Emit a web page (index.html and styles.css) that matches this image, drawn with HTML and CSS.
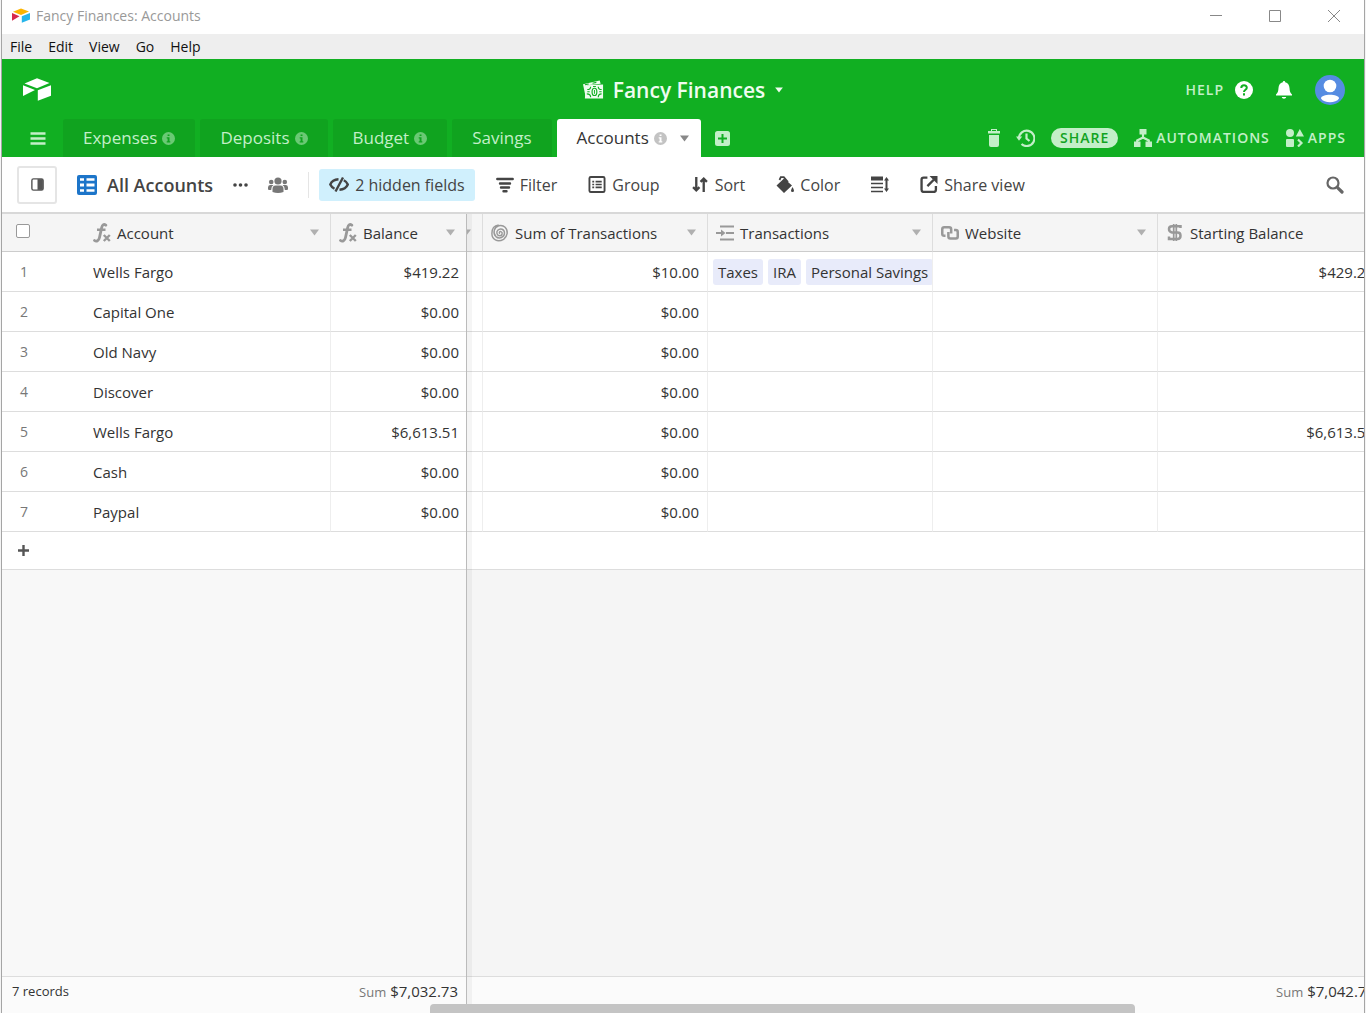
FILE: index.html
```html
<!DOCTYPE html>
<html lang="en">
<head>
    <meta charset="UTF-8">
    <meta name="viewport" content="width=device-width, initial-scale=1.0">
    <title>Fancy Finances: Accounts</title>
    <link rel="stylesheet" href="styles.css">
</head>
<body>
    <!-- Shared icons -->
    <svg class="sprite" aria-hidden="true">
        <symbol id="info" viewBox="0 0 13 13">
            <path fill="currentColor" fill-rule="evenodd" d="M6.500 0a6.500 6.500 0 1 0 0 13a6.500 6.500 0 0 0 0-13zM5.600 2.400h1.900v1.700H5.600zM4.700 5.200h2.800v4h.8v1.200H4.700V9.200h.9V6.400h-.9z"/>
        </symbol>
        <symbol id="caret" viewBox="0 0 9 7">
            <path fill="currentColor" d="M0 .5h9L4.500 6.500z"/>
        </symbol>
        <symbol id="formula" viewBox="0 0 18 20">
            <path fill="none" stroke="currentColor" stroke-width="2.800" stroke-linecap="round" d="M12.800 2.200C11 .8 9.300 1.500 8.700 4.500L6.500 14.500C5.800 17.800 3.500 19 1.500 17.500"/>
            <path fill="none" stroke="currentColor" stroke-width="2.400" d="M4 6.800h8.500M10.800 12l6 6M16.800 12l-6 6"/>
        </symbol>
    </svg>

    <div class="window">
        <div class="title-bar">
            <svg class="app-icon" viewBox="0 0 18 15">
                <path fill="#fcb400" d="M1 3.800L9 .4l8 3.200-8 3.300z"/>
                <path fill="#d8294c" d="M0 5l7.500 3.200L0 12.700z"/>
                <path fill="#27b5ea" d="M9.800 8.300L18 5v6.400l-8.200 3.300z"/>
            </svg>
            <span class="title-text">Fancy Finances: Accounts</span>
            <div class="window-controls">
                <button aria-label="Minimize"><svg viewBox="0 0 12 12"><path d="M0 5.500h12"/></svg></button>
                <button aria-label="Maximize"><svg viewBox="0 0 12 12"><path d="M.5.5h11v11H.5z"/></svg></button>
                <button aria-label="Close"><svg viewBox="0 0 12 12"><path d="M0 0l12 12M12 0L0 12"/></svg></button>
            </div>
        </div>

        <nav class="menu-bar">
            <button>File</button>
            <button>Edit</button>
            <button>View</button>
            <button>Go</button>
            <button>Help</button>
        </nav>

        <header class="base-header">
            <div class="header-top">
                <a href="#" class="home" aria-label="Home">
                    <svg viewBox="0 0 28 23">
                        <path fill="#fff" d="M1.500 5.400L14 .3l12.500 4.800L14 10.300zM0 7.300l12 4.800L0 18zM14.800 12.300L28 7.200v10.500l-13.200 5.100z"/>
                    </svg>
                </a>
                <button class="base-name">
                    <svg class="money" viewBox="0 0 22 20">
                        <path fill="currentColor" d="M0 4L17.500 0l1 3.500L4 5v13l-1 .3z"/>
                        <path fill="currentColor" d="M3 5l18-.800V19H2z"/>
                        <g fill="none" stroke="#11af22" stroke-width="1.200">
                            <ellipse cx="12" cy="12" rx="2.500" ry="3.800"/>
                            <path d="M4.500 9.500C6.500 9.500 8 8.500 8 6.500M16 6.500c0 2 1.500 3 3.500 3M4 14c2.500 0 4 1.500 4 3.500M16 17.500c0-2 1.500-3.500 3.500-3.500M10.500 6.300h3M4.500 11.800h2.500M17 11.800h2.500M2 4.500l4-.8M10 3l4-1"/>
                        </g>
                        <path stroke="#11af22" d="M12 10v4"/>
                    </svg>
                    <h1>Fancy Finances</h1>
                    <svg class="name-caret"><use href="#caret"/></svg>
                </button>
                <div class="header-user">
                    <button class="help">HELP
                        <svg class="help-icon" viewBox="0 0 18 18">
                            <circle cx="9" cy="9" r="9" fill="#fff"/>
                            <path fill="none" stroke="#11af22" stroke-width="2" d="M6.300 7c0-3.700 5.500-3.500 5.500-.300C11.800 8.800 9 8.700 9 11"/>
                            <path fill="#11af22" d="M8 12.300h2v2.200H8z"/>
                        </svg>
                    </button>
                    <button aria-label="Notifications">
                        <svg class="bell" viewBox="0 0 16 18">
                            <path fill="#fff" d="M8 0c.9 0 1.200.6 1.200 1.300C12 2 13.300 4.200 13.500 7c.2 3.500.8 4.800 2.500 6.500V14.500H0v-1C1.700 11.800 2.300 10.500 2.500 7 2.700 4.200 4 2 6.800 1.300 6.800.6 7.100 0 8 0zM5.800 16h4.400c-.3 2.300-4.100 2.300-4.400 0z"/>
                        </svg>
                    </button>
                    <button aria-label="Account">
                        <svg class="avatar" viewBox="0 0 30 30">
                            <circle cx="15" cy="15" r="15" fill="#568ce2"/>
                            <circle cx="15" cy="11" r="6.300" fill="#fff"/>
                            <path fill="#fff" d="M6 23.500c0-5 18-5 18 0-3 5-15 5-18 0z"/>
                        </svg>
                    </button>
                </div>
            </div>

            <div class="header-tabs">
                <button class="all-tables" aria-label="All tables">
                    <svg viewBox="0 0 15 13"><path fill="none" stroke="currentColor" stroke-width="2.400" d="M0 1.500h15M0 6.500h15M0 11.500h15"/></svg>
                </button>
                <nav class="tabs">
                    <button class="tab">Expenses <svg class="info"><use href="#info"/></svg></button>
                    <button class="tab">Deposits <svg class="info"><use href="#info"/></svg></button>
                    <button class="tab">Budget <svg class="info"><use href="#info"/></svg></button>
                    <button class="tab">Savings</button>
                    <button class="tab active">Accounts <svg class="info"><use href="#info"/></svg> <svg class="caret"><use href="#caret"/></svg></button>
                </nav>
                <button class="add-table" aria-label="Add table">
                    <svg viewBox="0 0 15 15"><path fill="currentColor" fill-rule="evenodd" d="M2.500 0h10A2.500 2.500 0 0 1 15 2.500v10a2.500 2.500 0 0 1-2.500 2.500h-10A2.500 2.500 0 0 1 0 12.500v-10A2.500 2.500 0 0 1 2.500 0zM6.500 3v3.500H3v2h3.500V12h2V8.500H12v-2H8.500V3z"/></svg>
                </button>
                <div class="base-actions">
                    <button aria-label="Trash">
                        <svg class="trash" viewBox="0 0 12 18">
                            <path fill="currentColor" d="M0 2h3V0h6v2h3v2.500H0zM1 6h10v10q0 2-2 2H3q-2 0-2-2z"/>
                            <path fill="#11af22" d="M4 1h4v1H4z"/>
                        </svg>
                    </button>
                    <button aria-label="History">
                        <svg class="history" viewBox="0 0 19 18">
                            <path fill="none" stroke="currentColor" stroke-width="2.200" d="M3 9.500A7.700 7.700 0 1 1 5.500 15M10.500 4.500V9.500l3 2.500"/>
                            <path fill="currentColor" d="M0 7.500h6.200L3 11.700z"/>
                        </svg>
                    </button>
                    <button class="share">SHARE</button>
                    <button class="automations">
                        <svg class="tree" viewBox="0 0 18 18">
                            <path fill="currentColor" d="M5.500 0h7v5.500h-7zM0 12.500h6.500V18H0zM11.500 12.500H18V18h-6.500z"/>
                            <path fill="none" stroke="currentColor" stroke-width="2.200" d="M9 5v4M3.200 13.500V11.500L9 8.500l5.800 3v2"/>
                        </svg>
                        AUTOMATIONS
                    </button>
                    <button class="apps">
                        <svg class="shapes" viewBox="0 0 18 18">
                            <circle cx="4" cy="4" r="4" fill="currentColor"/>
                            <path fill="currentColor" d="M13.800 0L18 7.500H9.800zM1 10h6q1 0 1 1v6q0 1-1 1H1q-1 0-1-1v-6q0-1 1-1z"/>
                            <path fill="none" stroke="currentColor" stroke-width="2.200" d="M12 10.500l3.500 3.500-3.500 3.500"/>
                        </svg>
                        APPS
                    </button>
                </div>
            </div>
        </header>

        <div class="toolbar">
            <button class="sidebar-toggle" aria-label="Toggle sidebar">
                <svg viewBox="0 0 12 12"><rect x=".8" y=".8" width="10.400" height="10.400" rx="1.500" fill="none" stroke="#555" stroke-width="1.300"/><path fill="#555" d="M6 1h5v10H6z"/></svg>
            </button>
            <button class="view-name">
                <svg viewBox="0 0 20 20"><path fill="#1d75c9" fill-rule="evenodd" d="M2 0h16q2 0 2 2v16q0 2-2 2H2q-2 0-2-2V2q0-2 2-2zM3 3.200v2.600h4V3.200zM9.500 3.200v2.600H17.500V3.200zM3 8.600v2.800h4V8.600zM9.500 8.600v2.800H17.500V8.600zM3 14.200v2.600h4v-2.600zM9.500 14.200v2.600H17.500v-2.600z"/></svg>
                <span>All Accounts</span>
            </button>
            <button class="more" aria-label="View options">
                <svg viewBox="0 0 15 4"><circle cx="2" cy="2" r="1.800"/><circle cx="7.500" cy="2" r="1.800"/><circle cx="13" cy="2" r="1.800"/></svg>
            </button>
            <button class="people" aria-label="Collaborative view">
                <svg viewBox="0 0 20 16">
                    <circle cx="10" cy="4" r="3.600"/><circle cx="3.200" cy="5" r="2.300"/><circle cx="16.800" cy="5" r="2.300"/>
                    <path d="M4.500 15V12q0-3.500 3-3.500h5q3 0 3 3.500v3q-5.500 2-11 0zM0 12.500V10.500Q0 8 2 8h3.500Q3 9.500 3.300 13 1.500 13.300 0 12.500zM20 12.500V10.500Q20 8 18 8h-3.500q2.500 1.500 2.200 5 1.800.3 3.300-.5z"/>
                </svg>
            </button>
            <div class="divider"></div>
            <button class="tool hidden-fields">
                <svg viewBox="0 0 20 16"><path fill="none" stroke="currentColor" stroke-width="2.400" d="M9.500 2.800C5.500 3 2.500 5 1.300 8q1.200 2.700 4.200 4.200M14 1L6.500 15M14.800 3.800q3 1.500 4 4.200c-1.200 3-4.300 5-8.300 5.200"/></svg>
                2 hidden fields
            </button>
            <button class="tool">
                <svg viewBox="0 0 18 16"><path fill="none" stroke="currentColor" stroke-width="2.400" stroke-linecap="round" d="M1.300 2.500h15.400M4 7h10M5 11h8M7.500 14.800h3"/></svg>
                Filter
            </button>
            <button class="tool">
                <svg viewBox="0 0 18 18"><rect x="1" y="1" width="16" height="16" rx="1.500" fill="none" stroke="currentColor" stroke-width="2"/><path fill="none" stroke="currentColor" stroke-width="1.800" d="M4 6h2M7.500 6H14M4 9h2M7.500 9H14M4 12h2M7.500 12H14"/></svg>
                Group
            </button>
            <button class="tool sort">
                <svg viewBox="0 0 16 16"><path fill="none" stroke="currentColor" stroke-width="2.200" d="M4.500 1v12.500M1.500 10.500l3 3 3-3M11.500 15V2.500M8.500 5.500l3-3 3 3"/></svg>
                Sort
            </button>
            <button class="tool">
                <svg viewBox="0 0 18 17"><path fill="currentColor" d="M.5 9.500L8 2.500l8 7-8 7.500zM16.500 11q3 5 0 5t0-5z"/><path fill="none" stroke="currentColor" stroke-width="1.800" d="M3.500 4l1.300-2.800h3L12 6"/></svg>
                Color
            </button>
            <button class="tool" aria-label="Row height">
                <svg viewBox="0 0 18 16"><path fill="currentColor" d="M0 0h12v4H0zM13 4l2.500-3.500L18 4zM13 12l2.500 3.500L18 12z"/><path fill="none" stroke="currentColor" stroke-width="1.600" d="M0 7h12M0 11h12M0 15h12"/><path stroke="currentColor" stroke-width="2" d="M15.500 3v10"/></svg>
            </button>
            <button class="tool share-view">
                <svg viewBox="0 0 16 16"><path fill="none" stroke="currentColor" stroke-width="2.200" d="M6.500 1.500H3Q1 1.500 1 3.500V13q0 2 2 2h9.500q2 0 2-2V9.500M6.500 9.500l6-6"/><path fill="currentColor" d="M8.500 0H16v7.500z"/></svg>
                Share view
            </button>
            <button class="search" aria-label="Search">
                <svg viewBox="0 0 18 18"><circle cx="7" cy="7" r="5.500" fill="none" stroke="currentColor" stroke-width="2.200"/><path stroke="currentColor" stroke-width="3.200" stroke-linecap="round" d="M11.800 11.800l4.200 4.200"/></svg>
            </button>
        </div>

        <main class="grid">
            <section class="pane pane-left">
                <table>
                    <colgroup><col class="col-number"><col class="col-account"><col class="col-balance"></colgroup>
                    <thead>
                        <tr>
                            <th class="number"><input type="checkbox" aria-label="Select all rows"></th>
                            <th><div class="field"><svg class="field-icon"><use href="#formula"/></svg><span>Account</span><svg class="caret"><use href="#caret"/></svg></div></th>
                            <th><div class="field"><svg class="field-icon"><use href="#formula"/></svg><span>Balance</span><svg class="caret"><use href="#caret"/></svg></div></th>
                        </tr>
                    </thead>
                    <tbody>
                        <tr><td class="number">1</td><td>Wells Fargo</td><td class="money-cell">$419.22</td></tr>
                        <tr><td class="number">2</td><td>Capital One</td><td class="money-cell">$0.00</td></tr>
                        <tr><td class="number">3</td><td>Old Navy</td><td class="money-cell">$0.00</td></tr>
                        <tr><td class="number">4</td><td>Discover</td><td class="money-cell">$0.00</td></tr>
                        <tr><td class="number">5</td><td>Wells Fargo</td><td class="money-cell">$6,613.51</td></tr>
                        <tr><td class="number">6</td><td>Cash</td><td class="money-cell">$0.00</td></tr>
                        <tr><td class="number">7</td><td>Paypal</td><td class="money-cell">$0.00</td></tr>
                    </tbody>
                </table>
                <div class="add-row">
                    <button aria-label="Add record"><svg viewBox="0 0 11 11"><path stroke="#555" stroke-width="2.400" d="M5.500 0v11M0 5.500h11"/></svg></button>
                </div>
                <div class="filler"></div>
                <div class="summary">
                    <span class="records">7 records</span>
                    <span><span class="sum">Sum</span> $7,032.73</span>
                </div>
            </section>

            <section class="pane pane-right">
                <table>
                    <colgroup><col class="col-cut"><col class="col-field"><col class="col-field"><col class="col-field"><col class="col-field"></colgroup>
                    <thead>
                        <tr>
                            <th class="cut"><svg class="caret"><use href="#caret"/></svg></th>
                            <th><div class="field">
                                <svg class="field-icon" viewBox="0 0 20 20"><path fill="none" stroke="currentColor" stroke-width="1.600" d="M10 10.500c-1.500-.5-.5-2.500 1-2 2.500 1 1.500 4.500-1 4.500-3.500 0-4.500-4-2.500-6 3-3 7.500-1 7.500 3 0 5-6 7-9.500 4-4-4-2-10.500 3-12 6-1.500 10 3 9.500 8.500-.5 3-2 5-4 6.500-7 4-13 0-13-6.500C1 5 4 1.500 8.500 1"/></svg>
                                <span>Sum of Transactions</span><svg class="caret"><use href="#caret"/></svg></div></th>
                            <th><div class="field">
                                <svg class="field-icon" viewBox="0 0 18 18"><path fill="none" stroke="currentColor" stroke-width="2.200" d="M4 2.500h14M0 9h7M10 9h8M4 15.500h14"/><path fill="currentColor" d="M5 5.500L9.500 9 5 12.500z"/></svg>
                                <span>Transactions</span><svg class="caret"><use href="#caret"/></svg></div></th>
                            <th><div class="field">
                                <svg class="field-icon" viewBox="0 0 20 16"><path fill="none" stroke="currentColor" stroke-width="2.800" d="M5 11H3.500Q1.400 11 1.400 9V3.700Q1.400 1.700 3.500 1.700H9q2.300 0 2.300 2.300v4.500M14.500 4.700h2q2.100 0 2.100 2.100v5q0 2.300-2.100 2.300h-6q-2.300 0-2.300-2.300V7"/></svg>
                                <span>Website</span><svg class="caret"><use href="#caret"/></svg></div></th>
                            <th><div class="field">
                                <svg class="field-icon" viewBox="0 0 18 20"><path fill="none" stroke="currentColor" stroke-width="2.500" d="M14.500 5V3.200H6Q3 3.200 3 6t3 3.500h5.500q3 0 3 3.200t-3 3.300H3v-2.500"/><path stroke="currentColor" stroke-width="1.700" d="M7.700 1v17M10.300 1v17"/></svg>
                                <span>Starting Balance</span></div></th>
                        </tr>
                    </thead>
                    <tbody>
                        <tr><td></td><td class="money-cell">$10.00</td><td class="links"><div class="chips"><span class="chip">Taxes</span><span class="chip">IRA</span><span class="chip">Personal Savings</span></div></td><td></td><td class="money-cell">$429.22</td></tr>
                        <tr><td></td><td class="money-cell">$0.00</td><td></td><td></td><td></td></tr>
                        <tr><td></td><td class="money-cell">$0.00</td><td></td><td></td><td></td></tr>
                        <tr><td></td><td class="money-cell">$0.00</td><td></td><td></td><td></td></tr>
                        <tr><td></td><td class="money-cell">$0.00</td><td></td><td></td><td class="money-cell">$6,613.51</td></tr>
                        <tr><td></td><td class="money-cell">$0.00</td><td></td><td></td><td></td></tr>
                        <tr><td></td><td class="money-cell">$0.00</td><td></td><td></td><td></td></tr>
                    </tbody>
                </table>
                <div class="add-row"></div>
                <div class="filler"></div>
                <div class="summary">
                    <span><span class="sum">Sum</span> $7,042.73</span>
                </div>
            </section>
            <div class="scrollbar"></div>
        </main>
    </div>
</body>
</html>
```
FILE: styles.css
```css
* {
    box-sizing: border-box;
}

body {
    margin: 0;
    background: #f4f4f4;
    color: #333;
    font-family: "Open Sans", "Noto Sans", sans-serif;
    font-size: 15px;
    line-height: 20px;
}

button {
    display: flex;
    align-items: center;
    flex-shrink: 0;
    padding: 0;
    border: 0;
    background: none;
    color: inherit;
    font: inherit;
    letter-spacing: inherit;
    white-space: nowrap;
}

svg {
    display: block;
    flex-shrink: 0;
}

.sprite {
    position: absolute;
    width: 0;
    height: 0;
}

.caret {
    width: 9px;
    height: 7px;
    color: #b0b0b0;
}

.window {
    display: flex;
    flex-direction: column;
    min-height: 100vh;
    margin: 0 1px;
    border: 1px solid #a5a5a5;
    border-width: 0 1px;
    background: #fff;
    overflow: hidden;
}

/* Title bar and menus */
.title-bar {
    display: flex;
    align-items: center;
    height: 34px;
    padding: 0 24px 3px 10px;
    color: #999;
    font-size: 14px;
}

.app-icon {
    width: 18px;
    height: 15px;
    margin-right: 6px;
}

.window-controls {
    display: flex;
    gap: 47px;
    margin-left: auto;
}

.window-controls svg {
    width: 12px;
    height: 12px;
    fill: none;
    stroke: #888;
}

.menu-bar {
    display: flex;
    gap: 16px;
    height: 25px;
    padding: 0 8px;
    background: #eee;
    color: #111;
    font-size: 14px;
}

/* Green header */
.base-header {
    background: #11af22;
    color: #c3efc8;
}

.header-top {
    display: grid;
    grid-template-columns: 1fr auto 1fr;
    align-items: center;
    height: 60px;
    padding: 1px 19px 0;
}

.home {
    margin-left: 2px;
}

.home svg {
    width: 28px;
    height: 23px;
}

.base-name {
    color: #effcf0;
}

.base-name h1 {
    margin: 0 10px 0 9px;
    font-size: 21px;
    font-weight: 600;
    line-height: 28px;
}

.money {
    width: 21px;
    height: 20px;
}

.name-caret {
    width: 8px;
    height: 6px;
}

.header-user {
    display: flex;
    align-items: center;
    justify-content: flex-end;
    gap: 23px;
}

.help,
.base-actions {
    font-size: 14px;
    font-weight: 600;
    letter-spacing: 1px;
}

.help-icon {
    width: 18px;
    height: 18px;
    margin-left: 11px;
}

.bell {
    width: 16px;
    height: 18px;
}

.avatar {
    width: 30px;
    height: 30px;
}

.header-tabs {
    display: flex;
    align-items: center;
    height: 38px;
    padding: 0 18px 0 28px;
}

.all-tables {
    margin-right: 17px;
}

.all-tables svg {
    width: 16px;
    height: 13px;
}

.tabs {
    display: flex;
    gap: 5px;
    height: 38px;
}

.tab {
    gap: 5px;
    padding: 0 20px;
    border-radius: 3px 3px 0 0;
    background: #10a31f;
    font-size: 17px;
}

.tab.active {
    padding-right: 12px;
    background: #fff;
    color: #333;
}

.info {
    width: 13px;
    height: 13px;
    opacity: 0.5;
}

.active .info {
    color: #aaa;
    opacity: 0.7;
}

.active .caret {
    margin-left: 8px;
    color: #888;
}

.add-table {
    margin-left: 14px;
}

.add-table svg {
    width: 15px;
    height: 15px;
}

.base-actions {
    display: flex;
    align-items: center;
    gap: 16px;
    margin-left: auto;
}

.trash {
    width: 12px;
    height: 18px;
}

.history {
    width: 19px;
    height: 18px;
}

.share {
    height: 20px;
    padding: 0 9px;
    border-radius: 10px;
    background: #c3efc8;
    color: #11a321;
}

.tree,
.shapes {
    width: 18px;
    height: 18px;
    margin-right: 4px;
}

/* View toolbar */
.toolbar {
    display: flex;
    align-items: center;
    height: 55px;
    padding: 0 20px 0 15px;
    color: #444;
}

.sidebar-toggle {
    justify-content: center;
    width: 40px;
    height: 38px;
    border: 2px solid #e5e5e5;
    border-radius: 3px;
}

.sidebar-toggle svg {
    width: 13px;
    height: 13px;
}

.view-name {
    gap: 10px;
    margin-left: 20px;
    font-size: 18px;
    font-weight: 600;
}

.view-name svg {
    width: 20px;
    height: 20px;
}

.more {
    margin-left: 20px;
}

.more svg {
    width: 15px;
    height: 4px;
    fill: #444;
}

.people {
    margin-left: 20px;
}

.people svg {
    width: 20px;
    height: 16px;
    fill: #777;
}

.divider {
    width: 1px;
    height: 26px;
    margin: 0 10px 0 20px;
    background: #e5e5e5;
}

.tool {
    gap: 6px;
    height: 32px;
    margin-right: 11px;
    padding: 0 10px;
    border-radius: 3px;
    font-size: 16px;
    font-weight: 500;
}

.tool svg {
    width: 18px;
    height: 17px;
}

.hidden-fields {
    background: #d0f0fd;
}

.hidden-fields svg {
    width: 20px;
}

.search {
    margin-left: auto;
    color: #666;
}

.search svg {
    width: 18px;
    height: 18px;
}

/* Grid */
.grid {
    position: relative;
    display: flex;
    flex: 1;
    border-top: 2px solid #d8d8d8;
}

.pane {
    display: flex;
    flex-direction: column;
}

.pane-left {
    flex: none;
    width: 465px;
    border-right: 1px solid #bbb;
}

.pane-right {
    position: relative;
    flex: 1;
    min-width: 0;
    overflow: hidden;
}

/* Shade beside the frozen columns */
.pane-right::before {
    content: "";
    position: absolute;
    top: 0;
    bottom: 0;
    left: 0;
    width: 5px;
    background: rgba(0, 0, 0, 0.04);
}

table {
    width: 100%;
    border-collapse: separate;
    border-spacing: 0;
    table-layout: fixed;
}

.pane-right table {
    width: 916px;
}

.col-number {
    width: 83px;
}

.col-account {
    width: 246px;
}

.col-cut {
    width: 16px;
}

.col-field {
    width: 225px;
}

th,
td {
    height: 40px;
    padding: 0 8px;
    border-right: 1px solid #eee;
    border-bottom: 1px solid #ddd;
    font-weight: 400;
    text-align: left;
    white-space: nowrap;
}

th {
    height: 38px;
    border-right-color: #ddd;
    border-bottom-color: #ccc;
    background: #f5f5f5;
}

.pane-left th:last-child,
.pane-left td:last-child,
.number {
    border-right: 0;
}

.number {
    padding-left: 18px;
    color: #777;
    font-size: 14px;
}

td.number {
    line-height: 18px;
}

.number input {
    display: block;
    width: 14px;
    height: 14px;
    margin: 0 0 4px -4px;
    border: 1px solid #999;
    border-radius: 2px;
    background: #fff;
    appearance: none;
}

.money-cell {
    text-align: right;
}

.pane-left .money-cell {
    padding-right: 7px;
}

.field {
    display: flex;
    align-items: center;
    gap: 6px;
}

.field-icon {
    width: 18px;
    height: 20px;
    color: #999;
}

.field .caret {
    margin-left: auto;
    margin-right: 3px;
}

.cut {
    padding: 0;
}

.cut .caret {
    margin-left: -5px;
}

.links {
    padding: 0 0 0 5px;
}

.chips {
    display: flex;
    gap: 5px;
    overflow: hidden;
}

.chip {
    flex: none;
    padding: 3px 5px;
    border-radius: 3px;
    background: #e8ebfa;
}

.add-row {
    display: flex;
    align-items: center;
    height: 38px;
    padding-left: 16px;
    border-bottom: 1px solid #ddd;
}

.add-row svg {
    width: 11px;
    height: 11px;
}

.filler {
    flex: 1;
    background: #f8f8f8;
}

.pane-right .filler {
    background: #f5f5f5;
}

.summary {
    display: flex;
    justify-content: space-between;
    height: 37px;
    padding: 4px 8px 0 10px;
    border-top: 1px solid #ddd;
    background: #fbfbfb;
}

.pane-right .summary {
    justify-content: flex-end;
    width: 916px;
}

.records,
.sum {
    font-size: 13px;
}

.sum {
    color: #777;
}

.scrollbar {
    position: absolute;
    bottom: 0;
    left: 31.4%;
    width: 51.8%;
    height: 9px;
    border-radius: 4px 4px 0 0;
    background: #c4c4c4;
}
```
